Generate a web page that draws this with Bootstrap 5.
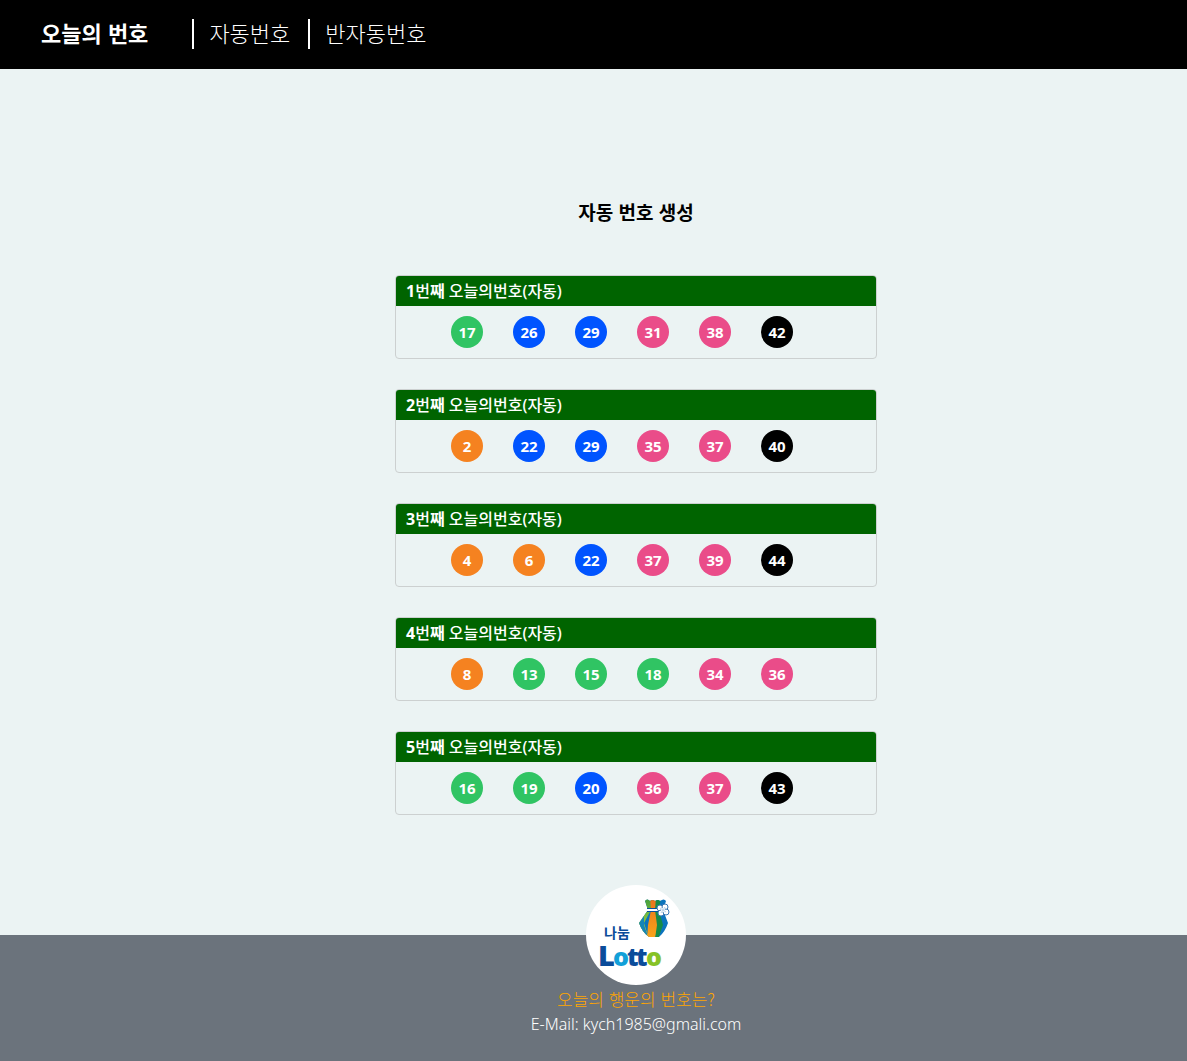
<!DOCTYPE html>
<html lang="ko">
<head>
<meta charset="utf-8">
<meta name="viewport" content="width=device-width, initial-scale=1">
<title>오늘의 번호</title>
<link href="https://cdn.jsdelivr.net/npm/bootstrap@5.3.0/dist/css/bootstrap.min.css" rel="stylesheet">
<style>
  body { background: #ebf3f3; color: #000; font-family: "Noto Sans", "Noto Sans CJK KR", sans-serif; font-size: 16px; line-height: 24px; }
  .top-bar { background: #000; padding: 19px 41px 20px; }
  .top-bar a { color: #fff; font-size: 22px; line-height: 26px; padding-bottom: 4px; font-family: "Noto Sans CJK KR", sans-serif; }
  .top-bar .brand { font-weight: 700; margin-right: 44px; }
  .top-bar .menu { gap: 18px; }
  .top-bar .menu a { display: block; font-weight: 300; border-left: 2px solid #fff; padding-left: 15px; }
  .shifted { padding-left: 85px; }
  .draws { padding-top: 130px; padding-bottom: 120px; }
  .page-title { font-family: "Noto Sans CJK KR", sans-serif; font-size: 19px; line-height: 26px; font-weight: 700; margin-bottom: 50px; }
  .draw-list { width: 100%; max-width: 482px; gap: 30px; }
  .draw { border: 1px solid #ccd0d0; border-radius: 4px; background: transparent; overflow: hidden; }
  .draw h2 { background: #006400; color: #fff; font-size: 16px; line-height: 30px; font-weight: 500; padding: 0 10px; margin: 0; }
  .balls { gap: 30px; padding: 10px 55px; margin: 0; }
  .ball { width: 32px; height: 32px; line-height: 32px; border-radius: 50%; color: #fff; font-size: 15px; font-weight: 700; text-align: center; }
  .b-orange { background: #f58220; }
  .b-blue { background: #0054ff; }
  .b-pink { background: #ea4c89; }
  .b-green { background: #30c463; }
  .b-black { background: #000; }
  .site-footer { background: #6b737c; color: #fff; padding-bottom: 24px; font-weight: 300; }
  .logo { width: 100px; height: 100px; margin-top: -50px; }
  .logo-ko { font: 700 14px "Noto Sans CJK KR", sans-serif; }
  .logo-cap { font: 800 29px "Open Sans", sans-serif; }
  .logo-low { font: 800 25px "Open Sans", sans-serif; }
  .slogan { color: #ffa500; line-height: 28px; font-weight: 300; font-family: "Noto Sans CJK KR", sans-serif; font-size: 17px; }
  .mail { font-size: 16px; line-height: 22px; padding-bottom: 2px; }
</style>
</head>
<body>
<nav class="top-bar d-flex align-items-center">
  <a class="brand text-decoration-none" href="#">오늘의 번호</a>
  <ul class="menu list-unstyled d-flex mb-0">
    <li><a class="text-decoration-none" href="#">자동번호</a></li>
    <li><a class="text-decoration-none" href="#">반자동번호</a></li>
  </ul>
</nav>
<main class="draws shifted d-flex flex-column align-items-center">
  <h1 class="page-title">자동 번호 생성</h1>
  <div class="draw-list d-flex flex-column">
    <section class="draw"><h2><b>1</b>번<b>째</b> 오늘의번호(자동)</h2>
      <ul class="balls list-unstyled d-flex"><li class="ball b-green">17</li><li class="ball b-blue">26</li><li class="ball b-blue">29</li><li class="ball b-pink">31</li><li class="ball b-pink">38</li><li class="ball b-black">42</li></ul></section>
    <section class="draw"><h2><b>2</b>번<b>째</b> 오늘의번호(자동)</h2>
      <ul class="balls list-unstyled d-flex"><li class="ball b-orange">2</li><li class="ball b-blue">22</li><li class="ball b-blue">29</li><li class="ball b-pink">35</li><li class="ball b-pink">37</li><li class="ball b-black">40</li></ul></section>
    <section class="draw"><h2><b>3</b>번<b>째</b> 오늘의번호(자동)</h2>
      <ul class="balls list-unstyled d-flex"><li class="ball b-orange">4</li><li class="ball b-orange">6</li><li class="ball b-blue">22</li><li class="ball b-pink">37</li><li class="ball b-pink">39</li><li class="ball b-black">44</li></ul></section>
    <section class="draw"><h2><b>4</b>번<b>째</b> 오늘의번호(자동)</h2>
      <ul class="balls list-unstyled d-flex"><li class="ball b-orange">8</li><li class="ball b-green">13</li><li class="ball b-green">15</li><li class="ball b-green">18</li><li class="ball b-pink">34</li><li class="ball b-pink">36</li></ul></section>
    <section class="draw"><h2><b>5</b>번<b>째</b> 오늘의번호(자동)</h2>
      <ul class="balls list-unstyled d-flex"><li class="ball b-green">16</li><li class="ball b-green">19</li><li class="ball b-blue">20</li><li class="ball b-pink">36</li><li class="ball b-pink">37</li><li class="ball b-black">43</li></ul></section>
  </div>
</main>
<footer class="site-footer shifted d-flex flex-column align-items-center">
  <svg class="logo" viewBox="0 0 100 100" role="img" aria-label="나눔 Lotto">
    <defs>
      <linearGradient id="gb" x1="0" y1="0" x2="0" y2="1"><stop offset="0" stop-color="#3f9b3c"/><stop offset=".6" stop-color="#8cc63e"/><stop offset="1" stop-color="#ffe100"/></linearGradient>
      <linearGradient id="go" x1="0" y1="0" x2="0" y2="1"><stop offset="0" stop-color="#e8701c"/><stop offset="1" stop-color="#f9a61a"/></linearGradient>
      <clipPath id="bag"><path d="M59 16q2-3 5 0 3-2 5 0 3-2 5 0 4-3 6 0l-3 9 5 13q-3 9-9 14H63q-7-5-10-14l9-13z"/></clipPath>
    </defs>
    <circle cx="50" cy="50" r="50" fill="#fff"/>
    <g clip-path="url(#bag)">
      <path d="M50 12h35v42H50z" fill="#0b74bd"/>
      <path d="M58 12h8l-1 13-7 13 5 16H50V38l11-13z" fill="url(#gb)"/>
      <path d="M53 38l5-7v9l5 14h-5z" fill="#1685b8"/>
      <path d="M64 12h6v13l2 15-3 14h-8l1-14 3-15z" fill="url(#go)"/>
      <path d="M70 12h5l-2 13 4 15-5 14h-3l2-14-2-15z" fill="#168b48"/>
    </g>
    <path d="M61 25h16" stroke="#07509c" stroke-width="4"/><path d="M61 25h16" stroke="#fff" stroke-width="2"/>
    <g fill="#fff" stroke="#3a78b4" stroke-width="1"><circle cx="74" cy="23" r="3"/><circle cx="79" cy="22" r="3"/><circle cx="75" cy="28" r="3"/><circle cx="80" cy="27" r="3"/></g>
    <circle cx="77" cy="25" r="2" fill="#fff"/><path d="M77 25l-3-2M77 25l2-3M77 25l-2 3M77 25l3 2" stroke="#b8d3e8"/>
    <text class="logo-ko" x="18" y="53" fill="#0b4c9a">나눔</text>
    <text class="logo-cap" x="12" y="81" fill="#0b4c9a">L</text>
    <text class="logo-low" y="81"><tspan x="27" fill="#12a0d8">o</tspan><tspan x="41" fill="#0b4c9a">t</tspan><tspan x="50" fill="#0b4c9a">t</tspan><tspan x="60" fill="#86c226">o</tspan></text>
  </svg>
  <div class="slogan">오늘의 행운의 번호는?</div>
  <div class="mail">E-Mail: kych1985@gmali.com</div>
</footer>
<script src="https://cdn.jsdelivr.net/npm/bootstrap@5.3.0/dist/js/bootstrap.bundle.min.js"></script>
</body>
</html>
